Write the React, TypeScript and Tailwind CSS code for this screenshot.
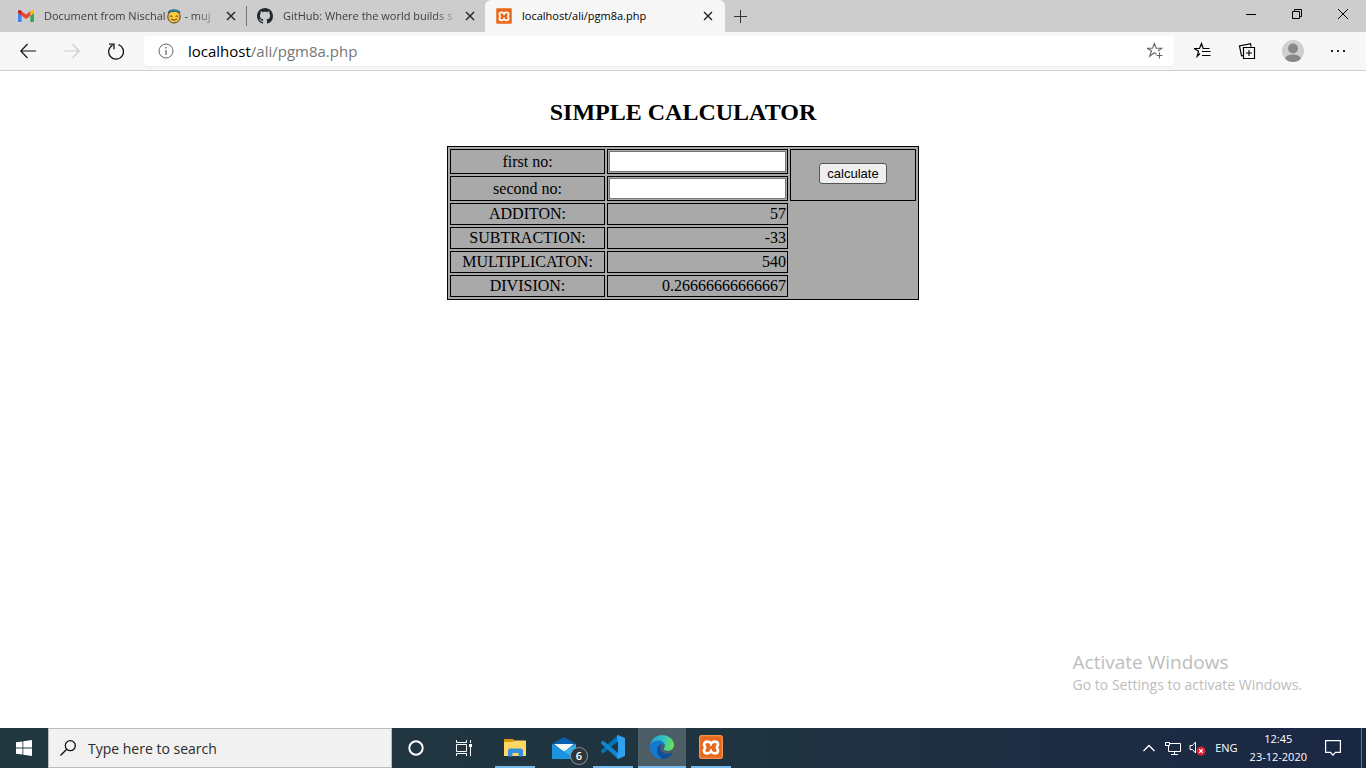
import React from "react";

const ui = "font-['Open_Sans','Noto_Sans',sans-serif]";

function XamppIcon({ className }: { className: string }) {
  return (
    <svg viewBox="0 0 24 24" className={className} aria-hidden="true">
      <rect width="24" height="24" rx="2.5" fill="#e8691c" />
      <rect x="0.7" y="0.7" width="22.6" height="22.6" rx="2" fill="none" stroke="#f6a46c" strokeWidth="0.9" />
      <path
        d="M12 8.300C10.800 7 9.800 6.600 8.300 6.600C6.300 6.600 5 7.900 5 9.500C5 10.900 6.200 11.500 6.200 12.500C6.200 13.500 5 14.100 5 15.500C5 17.100 6.300 18.400 8.300 18.400C9.800 18.400 10.800 18 12 16.700C13.200 18 14.200 18.400 15.700 18.400C17.700 18.400 19 17.100 19 15.500C19 14.100 17.800 13.500 17.800 12.500C17.800 11.500 19 10.900 19 9.500C19 7.900 17.700 6.600 15.700 6.600C14.200 6.600 13.200 7 12 8.300Z"
        fill="none"
        stroke="#fff"
        strokeWidth="2.600"
        strokeLinejoin="round"
      />
      <path d="M11 7.500h2v3.300h-2zM11 14.200h2v3.300h-2z" fill="#fff" />
    </svg>
  );
}

function GmailIcon() {
  return (
    <svg viewBox="0 0 24 18" className="h-3 w-4 shrink-0" aria-hidden="true">
      <path d="M1.600 18H5.500V8.700L0 4.600v11.800C0 17.300.7 18 1.600 18Z" fill="#4285f4" />
      <path d="M18.500 18h3.900c.9 0 1.600-.7 1.600-1.600V4.600l-5.500 4.100Z" fill="#34a853" />
      <path d="M18.500 1.700v7L24 4.600V2.400C24 .4 21.700-.7 20.100.5Z" fill="#fbbc04" />
      <path d="M5.500 8.700v-7l6.500 4.900 6.500-4.900v7L12 13.600Z" fill="#ea4335" />
      <path d="M0 2.400v2.200l5.500 4.100v-7L3.900.5C2.300-.7 0 .4 0 2.400Z" fill="#c5221f" />
    </svg>
  );
}

function GithubIcon() {
  return (
    <svg viewBox="0 0 16 16" className="size-4 shrink-0" fill="#24292e" aria-hidden="true">
      <path d="M8 0C3.580 0 0 3.580 0 8c0 3.540 2.290 6.530 5.470 7.590.4.070.55-.17.55-.38 0-.19-.01-.82-.01-1.490-2.010.37-2.530-.49-2.690-.94-.09-.23-.48-.94-.82-1.130-.28-.15-.68-.52-.01-.53.63-.01 1.080.58 1.230.82.72 1.210 1.870.87 2.330.66.070-.52.280-.87.510-1.070-1.780-.2-3.640-.89-3.640-3.950 0-.87.310-1.590.82-2.150-.08-.2-.36-1.020.080-2.120 0 0 .67-.21 2.200.82.640-.18 1.320-.27 2-.27s1.360.090 2 .27c1.530-1.040 2.200-.82 2.200-.82.440 1.100.160 1.920.080 2.120.510.560.820 1.270.820 2.150 0 3.070-1.870 3.750-3.650 3.950.290.250.540.730.540 1.480 0 1.070-.01 1.930-.01 2.200 0 .21.150.46.550.38A8.010 8.010 0 0 0 16 8c0-4.420-3.580-8-8-8Z" />
    </svg>
  );
}

function HaloFace() {
  return (
    <svg viewBox="0 0 16 16" className="h-4 w-4 shrink-0" role="img" aria-label="smiling face with halo">
      <circle cx="8" cy="8.800" r="6.200" fill="#ffc83d" stroke="#493a26" />
      <path d="M2 4.800C2 .8 14 .8 14 4.800C12 3 4 3 2 4.800Z" fill="#2ba6c8" stroke="#1b5362" strokeWidth="0.800" />
      <path d="M3.800 8.600q1.200-1.600 2.600 0M9.600 8.600q1.200-1.600 2.600 0M4.800 11q3.200 2.600 6.400 0" fill="none" stroke="#493a26" strokeWidth="1" />
    </svg>
  );
}

function Cross({ className }: { className: string }) {
  return (
    <svg viewBox="0 0 10 10" className={className} fill="none" stroke="currentColor" aria-hidden="true">
      <path d="M1 1l8 8M9 1l-8 8" strokeWidth="1.400" />
    </svg>
  );
}

function Tab({ icon, active, children }: { icon: React.ReactNode; active?: boolean; children: React.ReactNode }) {
  return (
    <div
      role="tab"
      aria-selected={!!active}
      className={
        active
          ? "flex w-60 items-center rounded-t-md bg-[#f7f7f7] pr-3 pl-[11px] text-black"
          : "flex w-[238px] items-center pr-2.5 pl-2.5 text-[#3d3d3d]"
      }
    >
      {icon}
      <span
        className={
          active
            ? "ml-2.5 flex flex-1 whitespace-nowrap"
            : "ml-2.5 flex flex-1 mask-r-from-85% whitespace-nowrap"
        }
      >
        {children}
      </span>
      <button aria-label="Close tab" className="ml-1 text-[#222]">
        <Cross className="size-2.5" />
      </button>
    </div>
  );
}

function TabStrip() {
  return (
    <div className="flex h-8 items-stretch bg-[#cdcdcd] text-[11px]">
      <div role="tablist" className="flex">
        <div className="flex pl-2">
          <Tab icon={<GmailIcon />}>
            Document from Nischal
            <HaloFace />
            &nbsp;- muj
          </Tab>
        </div>
        <div className="my-1.5 w-px bg-[#777]" />
        <Tab icon={<GithubIcon />}>GitHub: Where the world builds s</Tab>
        <Tab active icon={<XamppIcon className="size-4 shrink-0" />}>
          localhost/ali/pgm8a.php
        </Tab>
      </div>
      <button aria-label="New tab" className="px-2 text-[#333]">
        <svg viewBox="0 0 14 14" className="size-3.5" stroke="currentColor" aria-hidden="true">
          <path d="M7.500 1v13M1 7.500h13" />
        </svg>
      </button>
      <div className="ml-auto flex pb-1">
        <button aria-label="Minimize" className="flex w-[46px] items-center justify-center">
          <svg viewBox="0 0 10 10" className="size-2.5" stroke="#000" aria-hidden="true">
            <path d="M0 5.500h10" />
          </svg>
        </button>
        <button aria-label="Restore" className="flex w-[46px] items-center justify-center">
          <svg viewBox="0 0 10 10" className="size-2.5" fill="none" stroke="#000" aria-hidden="true">
            <path d="M.5 2.500h7v7h-7zM2.500 2.500v-2h7v7h-2" />
          </svg>
        </button>
        <button aria-label="Close" className="flex w-[46px] items-center justify-center">
          <svg viewBox="0 0 10 10" className="size-2.5" stroke="#000" aria-hidden="true">
            <path d="M0 0l10 10M10 0L0 10" />
          </svg>
        </button>
      </div>
    </div>
  );
}

function Toolbar() {
  return (
    <div className="flex h-[39px] items-center border-b border-[#d0d0d0] bg-[#f7f7f7]">
      <div className="flex w-36 shrink-0">
        <button aria-label="Back" className="ml-5 flex w-4 items-center">
          <svg viewBox="0 0 16 16" className="size-4" fill="none" stroke="#111" strokeWidth="1.200" aria-hidden="true">
            <path d="M16 8H.8M7.500 1L.8 8l6.700 7" />
          </svg>
        </button>
        <button aria-label="Forward" disabled className="ml-7 flex w-4 items-center">
          <svg viewBox="0 0 16 16" className="size-4" fill="none" stroke="#ccc" strokeWidth="1.200" aria-hidden="true">
            <path d="M0 8h15.200M8.500 1l6.700 7-6.700 7" />
          </svg>
        </button>
        <button aria-label="Refresh" className="ml-7 flex items-center">
          <svg viewBox="0 0 16 17" className="h-[17px] w-4" fill="none" stroke="#111" strokeWidth="1.300" aria-hidden="true">
            <path d="M10.500 1.700a7.400 7.400 0 1 1-6 .5M1 1.200h5v5" />
          </svg>
        </button>
      </div>
      <div className="flex h-[30px] flex-1 items-center rounded bg-white px-3.5 shadow-xs">
        <svg viewBox="0 0 16 16" className="size-4" fill="none" stroke="#666" aria-hidden="true">
          <circle cx="8" cy="8" r="7" />
          <path d="M8 7v5M8 4v1.400" strokeWidth="1.300" />
        </svg>
        <div className="ml-3.5 text-[15px] text-[#767676]">
          <span className="text-black">localhost</span>/ali/pgm8a.php
        </div>
        <button aria-label="Add to favorites" className="ml-auto -mr-1">
          <svg viewBox="0 0 18 18" className="size-[18px]" fill="none" stroke="#666" strokeWidth="1.100" aria-hidden="true">
            <path d="M10.500 12.200L8.300 10.700 3.700 14.300l1.800-5.600L1 6.300h5.500L8.300 1.500l1.900 4.800h5.500l-3.700 2.700M13.500 10.500v6M10.500 13.500h6" />
          </svg>
        </button>
      </div>
      <div className="flex w-48 shrink-0 items-center justify-between pr-5 pl-5">
        <button aria-label="Favorites">
          <svg viewBox="0 0 18 18" className="size-[18px]" fill="none" stroke="#000" strokeWidth="1.200" aria-hidden="true">
            <path d="M6 11.500L3.200 14.300l1.300-5L.5 6.500h5L7.500 1.500l1.700 5h6.300M8 9.500h8.500M8 13.500h8.500" />
          </svg>
        </button>
        <button aria-label="Collections">
          <svg viewBox="0 0 18 18" className="size-[18px]" fill="none" stroke="#000" strokeWidth="1.200" aria-hidden="true">
            <path d="M5.500 5.500h11v11h-11zM11 8v6M8 11h6M5 13.500l-1.500.3L1.500 4l11-2.300.6 3" />
          </svg>
        </button>
        <button aria-label="Profile" className="overflow-hidden rounded-full bg-[#d2d0ce]">
          <svg viewBox="0 0 22 22" className="size-[22px]" fill="#8a8886" aria-hidden="true">
            <circle cx="11" cy="8.500" r="5" />
            <ellipse cx="11" cy="19" rx="8" ry="4.500" />
          </svg>
        </button>
        <button aria-label="Settings and more">
          <svg viewBox="0 0 16 4" className="h-1 w-4" fill="#222" aria-hidden="true">
            <path d="M1 1h2v2H1zM7 1h2v2H7zM13 1h2v2h-2z" />
          </svg>
        </button>
      </div>
    </div>
  );
}

const results = [
  ["ADDITON:", "57"],
  ["SUBTRACTION:", "-33"],
  ["MULTIPLICATON:", "540"],
  ["DIVISION:", "0.26666666666667"],
];

function Calculator() {
  return (
    <form
      onSubmit={(e) => e.preventDefault()}
      className="flex flex-col items-center font-['Liberation_Serif',serif] text-base leading-[18px] text-black"
    >
      <h1 className="mt-7 mb-5 text-2xl leading-[27px] font-bold">SIMPLE CALCULATOR</h1>
      <table className="w-[472px] table-fixed border-separate border-spacing-0.5 border border-black bg-[#a9a9a9]">
        <colgroup>
          <col className="w-[155px]" />
          <col className="w-[181px]" />
          <col />
        </colgroup>
        <tbody>
          <tr>
            <td className="border border-black p-px text-center">
              <label htmlFor="first">first no:</label>
            </td>
            <td className="border border-black p-px">
              <input id="first" type="text" className="block h-[21px] w-full border border-[#767676] bg-white px-1" />
            </td>
            <td rowSpan={2} className="border border-black px-px pt-px pb-1 text-center">
              <button className="rounded-[3px] border border-[#555] bg-[#efefef] px-[7px] py-0.5 font-['Liberation_Sans',sans-serif] text-[13px] leading-[15px]">
                calculate
              </button>
            </td>
          </tr>
          <tr>
            <td className="border border-black p-px text-center">
              <label htmlFor="second">second no:</label>
            </td>
            <td className="border border-black p-px">
              <input id="second" type="text" className="block h-[21px] w-full border border-[#767676] bg-white px-1" />
            </td>
          </tr>
          {results.map(([name, value]) => (
            <tr key={name}>
              <td className="border border-black p-px text-center">{name}</td>
              <td className="border border-black p-px text-right">{value}</td>
            </tr>
          ))}
        </tbody>
      </table>
    </form>
  );
}

function Taskbar() {
  return (
    <div className="flex h-10 items-stretch bg-linear-to-r from-[#213840] via-[#203440] to-[#1a2744] text-white">
      <button aria-label="Start" className="flex w-12 items-center justify-center">
        <svg viewBox="0 0 16 16" className="size-4" fill="#fff" aria-hidden="true">
          <path d="M0 2.300l6.500-.9v6.200H0zM7.300 1.300L16 0v7.600H7.300zM0 8.400h6.500v6.200L0 13.700zM7.300 8.400H16V16l-8.700-1.200z" />
        </svg>
      </button>
      <label className="flex w-[344px] items-center border border-[#bbb] bg-[#f1f1f1] pl-[11px]">
        <svg viewBox="0 0 16 16" className="size-4 shrink-0" fill="none" stroke="#111" strokeWidth="1.300" aria-hidden="true">
          <circle cx="10.300" cy="5.700" r="5" />
          <path d="M6.700 9.300L.5 15.500" />
        </svg>
        <input
          type="text"
          aria-label="Search"
          placeholder="Type here to search"
          className="ml-3 min-w-0 flex-1 bg-transparent pt-0.5 text-sm text-black outline-none placeholder:text-[#2b2b2b]"
        />
      </label>
      <button aria-label="Cortana" className="flex w-12 items-center justify-center">
        <svg viewBox="0 0 16 16" className="size-4" fill="none" stroke="#fff" strokeWidth="2" aria-hidden="true">
          <circle cx="8" cy="8" r="6.700" />
        </svg>
      </button>
      <button aria-label="Task View" className="flex w-12 items-center justify-center">
        <svg viewBox="0 0 18 16" className="h-4 w-[18px]" fill="none" stroke="#fff" aria-hidden="true">
          <path d="M1.500 0v2.500h10V0M1.500 16v-2.500h10V16M1.500 4.500h10v7h-10zM15.500 0v3M15.500 7v9" />
          <path d="M14 4h3v3h-3z" fill="#fff" stroke="none" />
        </svg>
      </button>
      <button aria-label="File Explorer" className="mx-[7px] flex w-10 items-center justify-center border-b-2 border-[#76b9ed] pt-0.5">
        <svg viewBox="0 0 22 20" className="h-5 w-[22px]" aria-hidden="true">
          <path d="M0 1h9l1.500 2H22v5H0z" fill="#d99a00" />
          <path d="M0 4h8.500l2-1.500H22V18H0z" fill="#ffd765" />
          <path d="M4 18.500V12l1.500-1.500h12L19 12v6.500h-4.500V15h-6v3.500z" fill="#3590dd" />
        </svg>
      </button>
      <button aria-label="Mail, 6 new" className="relative flex w-[47px] items-center pl-2.5">
        <svg viewBox="0 0 24 24" className="size-6" aria-hidden="true">
          <path d="M0 8L12 1l12 7v5H0z" fill="#0a5fb0" />
          <path d="M2 8h20l-10 8z" fill="#f4f4f4" />
          <path d="M0 8l12 7.500L24 8v15H0z" fill="#2fb4ee" />
          <path d="M0 8l24 15H0z" fill="#1b93e0" />
        </svg>
        <span className="absolute right-0.5 bottom-1 flex size-4 items-center justify-center rounded-full bg-[#2b353b] text-[11px] font-semibold ring-1 ring-[#8b9297]">
          6
        </span>
      </button>
      <button aria-label="Visual Studio Code" className="mx-1 flex w-10 items-center justify-center border-b-2 border-[#76b9ed]">
        <svg viewBox="0 0 24 24" className="size-6" aria-hidden="true">
          <path d="M17 0v6.200L3.300 17.600 1.700 18.300 0 16.500v-1z" fill="#0074bd" />
          <path d="M17 24v-6.200L3.300 6.400 1.700 5.700 0 7.500v1z" fill="#1186cf" />
          <path d="M17 0l7 3v18l-7 3c-.7 0-.7-.3-.7-.3V.3z" fill="#2fa0ee" />
          <path d="M17 .2v6L9.500 12 17 17.800v6z" fill="#0a80ca" />
          <path d="M17 6.500v11L9.800 12z" fill="#213740" />
        </svg>
      </button>
      <button aria-label="Microsoft Edge" className="ml-px flex w-12 items-center justify-center border-b-2 border-[#76b9ed] bg-[#4d5d66]">
        <svg viewBox="0 0 24 24" className="size-6" aria-hidden="true">
          <defs>
            <linearGradient id="edgeTop" x1="0" y1="0.300" x2="1" y2="0.500">
              <stop offset="0" stopColor="#239fd8" />
              <stop offset="0.550" stopColor="#35c3bc" />
              <stop offset="1" stopColor="#66e34f" />
            </linearGradient>
          </defs>
          <path d="M0 12C0 5.400 5.400 0 12 0s12 4.500 12 9.800c0 3.700-2.700 6-6 6-2.800 0-4.200-.8-4.200-1.800 0-.8 1-1.300 1-3 0-2.500-2.500-4.500-6-4.500-4.300 0-8 2.500-8.800 5.500z" fill="url(#edgeTop)" />
          <path d="M0 12c0-4 4-6.500 8.800-6.500 3.500 0 6 2.600 6 5.300-1-1.300-2.200-1.600-3.500-1.600-2.500 0-4.300 2.800-4.300 6.300 0 4.500 3.500 7.800 7 8.200C6.500 25.200 0 19.500 0 12z" fill="#137ad0" />
          <path d="M11 9.300c-2.300.7-4 3.200-4 6.200 0 4.600 3.800 8.500 7.500 8.300 3.500-.6 6.200-2.800 7.900-5.500.3-.5-.1-.8-.6-.5-5.300 2.500-11.300.1-11.300-4.800 0-1.600.3-2.700.5-3.700z" fill="#0b4f9e" />
        </svg>
      </button>
      <button aria-label="XAMPP" className="mx-[5px] flex w-10 items-center justify-center border-b-2 border-[#76b9ed]">
        <XamppIcon className="size-6" />
      </button>
      <div className="ml-auto flex items-center text-xs">
        <button aria-label="Show hidden icons" className="mr-2.5">
          <svg viewBox="0 0 12 8" className="h-2 w-3" fill="none" stroke="#fff" strokeWidth="1.300" aria-hidden="true">
            <path d="M.5 7L6 1.500 11.500 7" />
          </svg>
        </button>
        <svg viewBox="0 0 16 14" className="h-3.5 w-4" fill="none" stroke="#fff" role="img" aria-label="Network">
          <path d="M5 2.500h10.500v8H3.500V5M9.500 10.500v3M6 13.500h7M.5 1.500h4v3h-4z" />
        </svg>
        <svg viewBox="0 0 18 16" className="ml-2 h-4 w-[18px]" fill="none" role="img" aria-label="Volume muted">
          <path d="M1 5.500h2.500l3-3.500v11l-3-3.500H1z" stroke="#fff" />
          <circle cx="12" cy="11" r="4.500" fill="#e0222e" />
          <path d="M10.200 9.200l3.600 3.600M13.800 9.200l-3.600 3.600" stroke="#fff" strokeWidth="1.200" />
        </svg>
        <span className="ml-2 text-[11px]">ENG</span>
        <div className="ml-3 text-center text-[11px] leading-[18px]">
          <div>12:45</div>
          <div>23-12-2020</div>
        </div>
        <button aria-label="Notifications" className="mr-5 ml-[18px]">
          <svg viewBox="0 0 16 16" className="size-4" fill="none" stroke="#fff" strokeWidth="1.200" aria-hidden="true">
            <path d="M.6.600h14.800v11.800h-5L7.900 15.200l-2.300-2.800H.6z" />
          </svg>
        </button>
        <div className="h-10 w-[5px] border-l border-[#6b7690]" />
      </div>
    </div>
  );
}

export default function App() {
  return (
    <div className={`flex min-h-screen flex-col bg-white ${ui}`}>
      <TabStrip />
      <Toolbar />
      <main className="flex flex-1 flex-col">
        <Calculator />
        <aside className="mt-auto mr-16 mb-8 self-end text-[#bdbdbd]">
          <p className="text-[19px] leading-6">Activate Windows</p>
          <p className="text-sm leading-[22px]">Go to Settings to activate Windows.</p>
        </aside>
      </main>
      <Taskbar />
    </div>
  );
}
